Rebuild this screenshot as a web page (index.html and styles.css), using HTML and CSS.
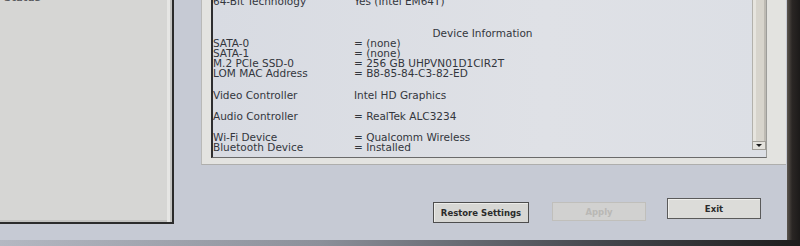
FILE: index.html
```html
<!DOCTYPE html>
<html>
<head>
<meta charset="utf-8">
<link rel="stylesheet" href="styles.css">
</head>
<body>
<div class="screen">
  <aside class="left">
    <div class="left-cut">Status</div>
  </aside>
  <main class="main">
    <section class="frame">
      <div class="inner">
        <div class="info">
          <div class="row first"><span class="lbl">64-Bit Technology</span><span class="val">Yes (Intel EM64T)</span></div>
          <div class="heading">Device Information</div>
          <div class="group">
            <div class="row"><span class="lbl">SATA-0</span><span class="val">= (none)</span></div>
            <div class="row"><span class="lbl">SATA-1</span><span class="val">= (none)</span></div>
            <div class="row"><span class="lbl">M.2 PCIe SSD-0</span><span class="val">= 256 GB UHPVN01D1CIR2T</span></div>
            <div class="row"><span class="lbl">LOM MAC Address</span><span class="val">= B8-85-84-C3-82-ED</span></div>
          </div>
          <div class="group video">
            <div class="row"><span class="lbl">Video Controller</span><span class="val">Intel HD Graphics</span></div>
          </div>
          <div class="group audio">
            <div class="row"><span class="lbl">Audio Controller</span><span class="val">= RealTek ALC3234</span></div>
          </div>
          <div class="group wifi">
            <div class="row"><span class="lbl">Wi-Fi Device</span><span class="val">= Qualcomm Wireless</span></div>
            <div class="row"><span class="lbl">Bluetooth Device</span><span class="val">= Installed</span></div>
          </div>
        </div>
        <div class="scrollbar">
          <div class="track"></div>
          <div class="arrow"><span class="tri"></span></div>
        </div>
      </div>
    </section>
    <div class="buttons">
      <button class="btn restore">Restore Settings</button>
      <button class="btn apply" disabled>Apply</button>
      <button class="btn exit">Exit</button>
    </div>
  </main>
  <div class="bezel"></div>
</div>
<div class="bottom"></div>
</body>
</html>
```
FILE: styles.css
```css
html, body {
  margin: 0;
  padding: 0;
}
body {
  width: 800px;
  height: 246px;
  overflow: hidden;
  background: #c6cad4;
  font-family: "DejaVu Sans", Verdana, sans-serif;
  color: #33363d;
}
.screen {
  display: flex;
  height: 240px;
}
.left {
  width: 172px;
  height: 222px;
  flex: none;
  background: #d6d6d4;
  border-right: 2px solid #2b2b2b;
  border-bottom: 2px solid #2b2b2b;
  box-shadow: inset -2px 0 0 #c4c4c2, inset -5px 0 0 #e6e6e4, inset 0 -2px 0 #c2c2c0;
  overflow: hidden;
}
.left-cut {
  margin: -7px 0 0 4px;
  font-size: 10px;
  line-height: 10px;
  font-weight: bold;
  color: #5a5b5f;
}
.main {
  width: 585px;
  margin-left: 27px;
  flex: none;
  display: flex;
  flex-direction: column;
}
.frame {
  height: 165px;
  box-sizing: border-box;
  background: #e3e3e0;
  border-left: 1px solid #b9b9b7;
  border-bottom: 1px solid #aeaeac;
  padding: 0 19px 6px 9px;
  display: flex;
}
.inner {
  flex: 1;
  display: flex;
  background: linear-gradient(90deg, #d8dbe2, #dfe1e6 60%, #dcdfe5);
  border-left: 2px solid #2e2e30;
  border-bottom: 1px solid #6a6a6a;
  border-right: 1px solid #9c9c99;
}
.info {
  flex: 1;
  font-size: 10.5px;
  line-height: 10px;
  overflow: hidden;
}
.row {
  display: grid;
  grid-template-columns: 141px auto;
  white-space: nowrap;
}
.row.first {
  margin-top: -4px;
}
.heading {
  margin-top: 22px;
  text-align: center;
}
.group.video { margin-top: 12px; }
.group.audio { margin-top: 11px; }
.group.wifi { margin-top: 11px; }
.scrollbar {
  width: 14px;
  display: flex;
  flex-direction: column;
  padding-bottom: 7px;
}
.track {
  flex: 1;
  background: linear-gradient(90deg, #b3b1ab 0 1px, #e6e4de 1px 4px, #d7d4cc 4px 12px, #bdbab3 12px);
}
.arrow {
  height: 9px;
  box-sizing: border-box;
  background: #e4e2dc;
  border: 1px solid #a19e97;
  display: flex;
  align-items: center;
  justify-content: center;
}
.tri {
  width: 0;
  height: 0;
  border-left: 3px solid transparent;
  border-right: 3px solid transparent;
  border-top: 3px solid #1a1a1a;
}
.buttons {
  display: flex;
  align-items: flex-start;
  padding: 37px 0 0 232px;
}
.btn {
  font-family: "DejaVu Sans", Verdana, sans-serif;
  font-size: 8.5px;
  font-weight: bold;
  padding: 0;
  box-sizing: border-box;
  cursor: default;
}
.restore {
  width: 96px;
  height: 21px;
  background: #d7d7d4;
  border: 1px solid #4d4d4d;
  box-shadow: inset 1px 1px 0 #ecece9;
  color: #2b2b2b;
}
.apply {
  width: 94px;
  height: 19px;
  margin: 0 0 0 23px;
  background: #d1d1d0;
  border: 1px solid #c0bfbb;
  color: #b9b8b5;
}
.exit {
  width: 94px;
  height: 21px;
  margin: -4px 0 0 21px;
  background: #dcdcd9;
  border: 1px solid #5a5a5a;
  box-shadow: inset 1px 1px 0 #efefec;
  color: #2b2b2b;
}
.bezel {
  flex: 1;
  margin-left: 1px;
  background: linear-gradient(90deg, #5b554e, #2a2624 40%, #1c1a19);
}
.bottom {
  height: 6px;
  background: linear-gradient(90deg, #b4b8c2, #8c909a 40%, #45474d 75%, #1d1c1c);
}
```
